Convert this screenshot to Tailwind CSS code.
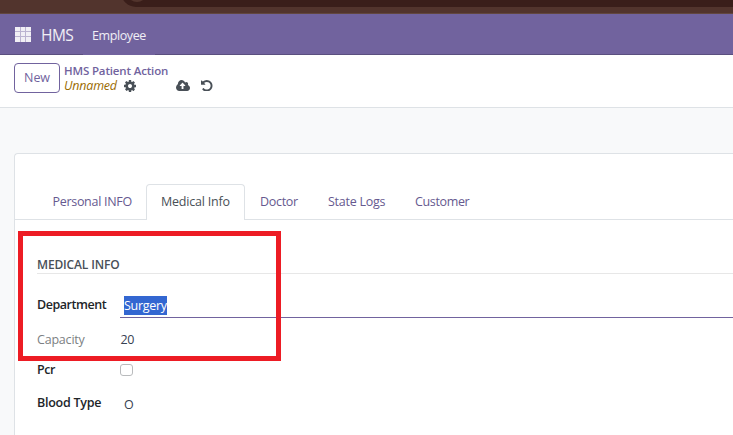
<!DOCTYPE html>
<html lang="en">
<head>
<meta charset="utf-8">
<title>HMS Patient Action</title>
<script src="https://cdn.jsdelivr.net/npm/@tailwindcss/browser@4"></script>
</head>
<body class="w-[733px] h-[435px] overflow-hidden bg-[#f8f9fa] font-['Open_Sans','Noto_Sans',sans-serif] text-[12.5px] leading-[18px] text-[#374151]">
<div class="relative flex h-full flex-col">
  <!-- Browser chrome -->
  <div class="h-[14px] shrink-0 overflow-hidden border-b border-[#62473f] bg-[#52342d] pl-[121px]">
    <div class="-mt-[23px] h-[30px] w-[700px] rounded-l-full bg-[#3a1e1a] pl-[6px] pt-[5px]"><div class="size-5 rounded-full bg-[#52342d]"></div></div>
  </div>
  <!-- Navigation -->
  <nav class="flex h-[41px] shrink-0 bg-[#71639e] text-white/90">
    <div class="flex w-[83px] items-center border-b border-[#5a4f7f] pl-[15px]">
      <svg class="h-[15px] w-4 shrink-0" viewBox="0 0 16 15" fill="#f1eff5" shape-rendering="crispEdges"><path fill="#bbb3d0" d="M0 0h16v15H0z"/><path d="M0 0h5v4H0zM6 0h4v4H6zM11 0h5v4h-5zM0 5h5v4H0zM6 5h4v4H6zM11 5h5v4h-5zM0 10h5v5H0zM6 10h4v5H6zM11 10h5v5h-5z"/></svg>
      <span class="ml-[10px] pt-px text-[15.5px] tracking-[-0.5px]">HMS</span>
    </div>
    <div class="flex w-[72px] items-center pl-[9px] pt-[2px]"><span class="tracking-[-0.4px] text-[12.5px]">Employee</span></div>
    <div class="flex-1 border-b border-[#5a4f7f]"></div>
  </nav>
  <!-- Control panel -->
  <header class="flex h-[53px] shrink-0 border-b border-[#dee2e6] bg-white pl-[14px] pt-2">
    <button class="flex h-[30px] w-[46px] items-center justify-center rounded-[4px] border border-[#71639e] pb-px text-[12.5px] font-medium tracking-[-0.1px] text-[#71639e]">New</button>
    <div class="ml-1">
      <div class="h-[15px] whitespace-nowrap text-[11.5px] font-semibold leading-[15px] tracking-[-0.15px] text-[#71639e]">HMS Patient Action</div>
      <div class="flex h-[15px] items-center leading-[15px]">
        <span class="w-[53px] text-[12.5px] italic leading-[14px] tracking-[-0.2px] text-[#9a6b01]">Unnamed</span>
        <svg class="ml-[7px] size-[12px]" viewBox="128 128 1536 1536" fill="#495057"><path d="M1152 896q0-106-75-181t-181-75-181 75-75 181 75 181 181 75 181-75 75-181zm512-109v222q0 12-8 23t-20 13l-185 28q-19 54-39 91 35 50 107 138 10 12 10 25t-9 23q-27 37-99 108t-94 71q-12 0-26-9l-138-108q-44 23-91 38-16 136-29 186-7 28-36 28h-222q-14 0-24.5-8.5t-11.5-21.5l-28-184q-49-16-90-37l-141 107q-10 9-25 9-14 0-25-11-126-114-165-168-7-10-7-23 0-12 8-23 15-21 51-66.5t54-70.5q-27-50-41-99l-183-27q-13-2-21-12.5t-8-23.5v-222q0-12 8-23t19-13l186-28q14-46 39-92-40-57-107-138-10-12-10-24 0-10 9-23 26-36 98.5-107.5t94.5-71.5q13 0 26 10l138 107q44-23 91-38 16-136 29-186 7-28 36-28h222q14 0 24.5 8.5t11.5 21.5l28 184q49 16 90 37l142-107q9-9 24-9 13 0 25 10 129 119 165 170 7 8 7 22 0 12-8 23-15 21-51 66.5t-54 70.5q26 50 41 98l183 28q13 2 21 12.5t8 23.5z"/></svg>
        <svg class="ml-10 h-[11px] w-[14px]" viewBox="0 192 1920 1408" preserveAspectRatio="none" fill="#495057"><path d="M1280 928q0-14-9-23l-352-352q-9-9-23-9t-23 9l-351 351q-10 12-10 24 0 14 9 23t23 9h224v352q0 13 9.5 22.5t22.5 9.5h192q13 0 22.5-9.5t9.5-22.5v-352h224q13 0 22.5-9.5t9.5-22.5zm640 288q0 159-112.5 271.5t-271.5 112.5h-1088q-185 0-316.5-131.5t-131.5-316.5q0-130 70-240t188-165q-2-30-2-43 0-212 150-362t362-150q156 0 285.5 87t188.5 231q71-62 166-62 106 0 181 75t75 181q0 76-41 138 130 31 213.5 135.5t83.5 238.5z"/></svg>
        <svg class="ml-[11px] size-[11.5px]" viewBox="128 128 1536 1536" fill="#495057"><path d="M1664 896q0 156-61 298t-164 245-245 164-298 61q-172 0-327-72.5t-264-204.5q-7-10-6.5-22.5t8.5-20.5l137-138q10-9 25-9 16 2 23 12 73 95 179 147t225 52q104 0 198.5-40.5t163.5-109.5 109.5-163.5 40.5-198.5-40.5-198.5-109.5-163.5-163.5-109.5-198.5-40.5q-98 0-188 35.5t-160 101.5l137 138q31 30 14 69-17 40-59 40h-448q-26 0-45-19t-19-45v-448q0-42 40-59 39-17 69 14l130 129q107-101 244.5-156.5t284.5-55.5q156 0 298 61t245 164 164 245 61 298z"/></svg>
      </div>
    </div>
  </header>
  <!-- Form sheet -->
  <main class="ml-[14px] mt-[45px] flex-1 rounded-tl-[4px] border-l border-t border-[#dee2e6] bg-white pt-[30px]">
    <div class="flex h-[36px] whitespace-nowrap border-b border-[#dee2e6] pl-[22px] leading-[36px] tracking-[-0.3px] text-[#66598f]">
      <div class="w-[109px] pl-[15.5px]">Personal INFO</div>
      <div class="h-[36px] w-[99px] rounded-t-[4px] border border-b-0 border-[#dee2e6] bg-white pl-[14px] leading-[33px] tracking-[-0.2px] text-[#495057]">Medical Info</div>
      <div class="w-[68px] pl-[15px]">Doctor</div>
      <div class="w-[87px] pl-[15px] tracking-[-0.25px]">State Logs</div>
      <div class="pl-[15px] tracking-[-0.35px]">Customer</div>
    </div>
    <div class="pl-[22px] pt-[36px]">
      <h2 class="h-[18px] border-b border-[#e7e7e7] text-[12px] font-semibold leading-[18px] tracking-[-0.15px] text-[#495057]">MEDICAL INFO</h2>
      <div class="mt-[22px] flex h-[22px]">
        <label class="w-[83px] font-semibold tracking-[-0.45px] text-[#212529]">Department</label>
        <div class="flex-1 border-b border-[#71639e] pl-1"><span class="block h-[19px] w-[43px] bg-[#3367d1] leading-[19px] tracking-[-0.3px] text-white">Surgery</span></div>
      </div>
      <div class="mt-[13px] flex h-[18px]"><label class="w-[83.5px] tracking-[-0.2px] text-[#7c7f83]">Capacity</label><span class="tracking-[-0.3px]">20</span></div>
      <div class="mt-[11px] flex h-[18px] items-center"><label class="w-[83px] pt-[2px] font-semibold tracking-[-0.45px] text-[#212529]">Pcr</label><span class="mt-[2px] h-[12px] w-[13px] rounded-[3px] border border-[#b9bbbd] bg-white"></span></div>
      <div class="mt-[16px] flex h-[18px]"><label class="w-[87px] font-semibold tracking-[-0.25px] text-[#212529]">Blood Type</label><span class="pt-[2px]">O</span></div>
    </div>
  </main>
  <!-- Annotation -->
  <div class="absolute left-[18px] top-[231px] h-[130px] w-[263px] border-[5px] border-[#ed1c24]"></div>
</div>
</body>
</html>
